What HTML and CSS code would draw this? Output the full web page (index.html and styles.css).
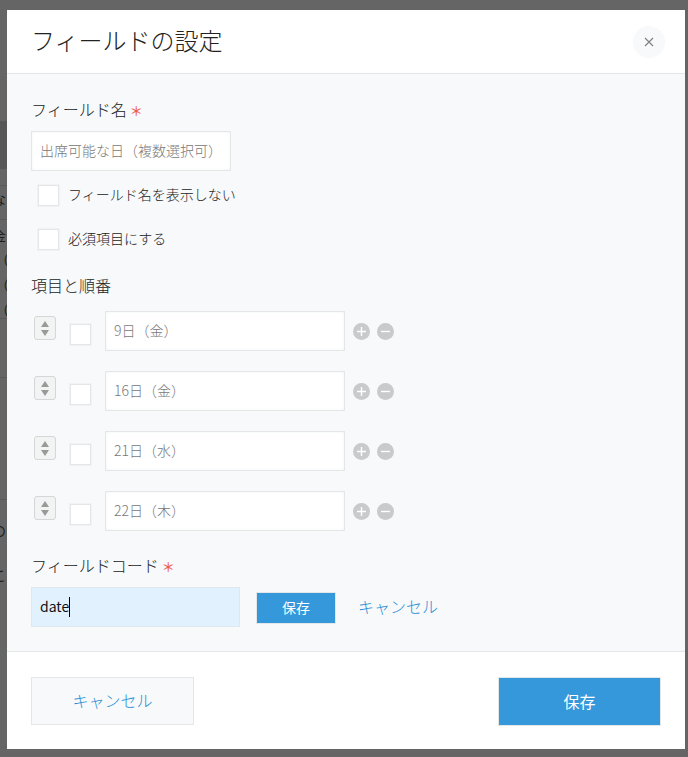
FILE: index.html
```html
<!DOCTYPE html>
<html lang="ja">
<head>
  <meta charset="UTF-8" />
  <title>フィールドの設定</title>
  <link rel="stylesheet" href="styles.css">
</head>
<body>

  <!-- page behind the overlay, only the left edge shows -->
  <div class="backdrop" aria-hidden="true">
    <div class="bg-band"></div>
    <div class="bg-line bg-line-1"></div>
    <div class="bg-line bg-line-2"></div>
    <div class="bg-line bg-line-3"></div>
    <div class="bg-line bg-line-4"></div>
    <div class="bg-line bg-line-5"></div>
    <span class="bg-text bg-text-1">な</span>
    <span class="bg-text bg-text-2">金</span>
    <span class="bg-text bg-text-3">（</span>
    <span class="bg-text bg-text-4">（</span>
    <span class="bg-text bg-text-5">（</span>
    <span class="bg-text bg-text-6">の</span>
    <span class="bg-text bg-text-7">こ</span>
  </div>

  <div class="modal">
    <header class="modal-header">
      <h1>フィールドの設定</h1>
      <button class="close-btn" aria-label="閉じる">
        <svg width="10" height="10" viewBox="0 0 10 10"><path d="M1 1l8 8M9 1l-8 8" stroke="#7b7f83" stroke-width="1.1" fill="none"/></svg>
      </button>
    </header>

    <main class="modal-body">
      <div class="label">フィールド名<span class="req">＊</span></div>
      <input class="text-input name-input" type="text" value="出席可能な日（複数選択可）" />

      <label class="check-row check-row-first"><span class="check"></span><span class="check-text">フィールド名を表示しない</span></label>
      <label class="check-row"><span class="check"></span><span class="check-text">必須項目にする</span></label>

      <div class="label items-label">項目と順番</div>

      <div class="item-row">
        <span class="sorter"><i class="up"></i><i class="down"></i></span>
        <span class="check"></span>
        <input class="text-input item-input" type="text" value="9日（金）" />
        <span class="round-btn"><svg width="17" height="17" viewBox="0 0 17 17"><path d="M4 8.5h9M8.5 4v9" stroke="#fff" stroke-width="1.4"/></svg></span>
        <span class="round-btn"><svg width="17" height="17" viewBox="0 0 17 17"><path d="M4 8.5h9" stroke="#fff" stroke-width="1.4"/></svg></span>
      </div>
      <div class="item-row">
        <span class="sorter"><i class="up"></i><i class="down"></i></span>
        <span class="check"></span>
        <input class="text-input item-input" type="text" value="16日（金）" />
        <span class="round-btn"><svg width="17" height="17" viewBox="0 0 17 17"><path d="M4 8.5h9M8.5 4v9" stroke="#fff" stroke-width="1.4"/></svg></span>
        <span class="round-btn"><svg width="17" height="17" viewBox="0 0 17 17"><path d="M4 8.5h9" stroke="#fff" stroke-width="1.4"/></svg></span>
      </div>
      <div class="item-row">
        <span class="sorter"><i class="up"></i><i class="down"></i></span>
        <span class="check"></span>
        <input class="text-input item-input" type="text" value="21日（水）" />
        <span class="round-btn"><svg width="17" height="17" viewBox="0 0 17 17"><path d="M4 8.5h9M8.5 4v9" stroke="#fff" stroke-width="1.4"/></svg></span>
        <span class="round-btn"><svg width="17" height="17" viewBox="0 0 17 17"><path d="M4 8.5h9" stroke="#fff" stroke-width="1.4"/></svg></span>
      </div>
      <div class="item-row">
        <span class="sorter"><i class="up"></i><i class="down"></i></span>
        <span class="check"></span>
        <input class="text-input item-input" type="text" value="22日（木）" />
        <span class="round-btn"><svg width="17" height="17" viewBox="0 0 17 17"><path d="M4 8.5h9M8.5 4v9" stroke="#fff" stroke-width="1.4"/></svg></span>
        <span class="round-btn"><svg width="17" height="17" viewBox="0 0 17 17"><path d="M4 8.5h9" stroke="#fff" stroke-width="1.4"/></svg></span>
      </div>

      <div class="label code-label">フィールドコード<span class="req">＊</span></div>
      <div class="code-row">
        <div class="code-input"><span>date</span><span class="caret"></span></div>
        <button class="btn-primary btn-small">保存</button>
        <a class="link" href="#">キャンセル</a>
      </div>
    </main>

    <footer class="modal-footer">
      <button class="btn-cancel">キャンセル</button>
      <button class="btn-primary btn-large">保存</button>
    </footer>
  </div>

</body>
</html>
```

FILE: styles.css
```css
* {
  box-sizing: border-box;
}
html, body {
  height: 100%;
}
body {
  margin: 0;
  padding: 10px 3px 8px 7px;
  overflow: hidden;
  background: #646564;
  font-family: "Noto Sans CJK JP", "Noto Sans", sans-serif;
  color: #333;
}

/* Page behind overlay */
.backdrop {
  position: absolute;
  top: 0;
  left: 0;
  width: 7px;
  height: 100%;
  overflow: hidden;
}
.bg-band {
  position: absolute;
  top: 121px;
  left: 0;
  width: 7px;
  height: 48px;
  background: #565756;
}
.bg-line {
  position: absolute;
  left: 0;
  width: 7px;
  height: 1px;
  background: #585958;
}
.bg-line-1 { top: 185px; }
.bg-line-2 { top: 219px; }
.bg-line-3 { top: 318px; }
.bg-line-4 { top: 377px; }
.bg-line-5 { top: 499px; }
.bg-text {
  position: absolute;
  left: -8px;
  font-size: 14px;
  line-height: 20px;
  color: #1d1d1d;
}
.bg-text-1 { top: 189px; }
.bg-text-2 { top: 225px; }
.bg-text-3 { top: 249px; left: -5px; }
.bg-text-4 { top: 274px; left: -5px; }
.bg-text-5 { top: 299px; left: -5px; }
.bg-text-6 { top: 520px; }
.bg-text-7 { top: 565px; }

/* Modal */
.modal {
  position: relative;
  display: flex;
  flex-direction: column;
  width: 678px;
  height: 739px;
  background: #fff;
}
.modal-header {
  display: flex;
  align-items: center;
  justify-content: space-between;
  height: 64px;
  padding: 0 20px 0 24px;
  border-bottom: 1px solid #e3e7e8;
}
.modal-header h1 {
  margin: 0 0 5px;
  font-size: 24px;
  font-weight: 300;
  color: #222;
}
.close-btn {
  display: flex;
  align-items: center;
  justify-content: center;
  width: 32px;
  height: 32px;
  margin-top: 1px;
  padding: 0;
  border: none;
  border-radius: 50%;
  background: #f7f9fa;
}

.modal-body {
  flex: 1;
  padding: 23px 24px 0;
  background: #f7f9fa;
  border-bottom: 1px solid #e3e7e8;
}
.label {
  height: 24px;
  font-size: 16px;
  font-weight: 300;
  line-height: 24px;
  color: #222;
}
.req {
  margin-left: 3px;
  font-size: 13px;
  font-weight: 500;
  color: #ec5f4f;
}

.text-input {
  display: block;
  height: 40px;
  padding: 0 8px 2px;
  border: 1px solid #e3e7e8;
  background: #fff;
  box-shadow: inset 0 0 3px #f0f2f3;
  font-family: inherit;
  font-size: 14px;
  font-weight: 300;
  color: #777;
  outline: none;
}
.name-input {
  width: 200px;
  margin-top: 10px;
}

.check {
  flex: none;
  display: block;
  width: 21px;
  height: 21px;
  border: 1px solid #e3e7e8;
  box-shadow: 0 0 0 1px #f0f2f3;
  background: #fff;
}
.check-row {
  display: flex;
  align-items: center;
  gap: 9px;
  height: 21px;
  margin: 23px 0 0 7px;
  font-size: 14px;
  font-weight: 300;
  color: #222;
}
.check-text {
  padding-bottom: 3px;
}
.check-row-first {
  margin-top: 14px;
}
.items-label {
  margin-top: 23px;
}

/* Item rows */
.item-row {
  display: flex;
  align-items: center;
  height: 40px;
  margin-top: 20px;
}
.items-label + .item-row {
  margin-top: 14px;
}
.sorter {
  flex: none;
  display: flex;
  flex-direction: column;
  align-items: center;
  justify-content: center;
  gap: 3px;
  width: 22px;
  height: 24px;
  margin: -6px 14px 0 3px;
  border: 1px solid #d4d6d7;
  border-radius: 3px;
  background: #f2f3f3;
}
.sorter i {
  display: block;
  width: 0;
  height: 0;
  border-left: 4px solid transparent;
  border-right: 4px solid transparent;
}
.sorter .up {
  border-bottom: 6px solid #999;
}
.sorter .down {
  border-top: 6px solid #999;
}
.item-row .check {
  margin: 7px 14px 0 0;
}
.item-input {
  width: 240px;
}
.round-btn {
  flex: none;
  display: block;
  width: 17px;
  height: 17px;
  margin-left: 7px;
  border-radius: 50%;
  background: #c9cacb;
}
.round-btn svg {
  display: block;
}
.item-input + .round-btn {
  margin-left: 8px;
}

/* Field code */
.code-label {
  margin-top: 22px;
}
.code-row {
  display: flex;
  align-items: center;
  margin-top: 10px;
}
.code-input {
  display: flex;
  align-items: center;
  width: 209px;
  height: 40px;
  padding: 0 8px;
  border: 1px solid #dfe8ed;
  background: #e1f2fe;
  font-size: 14px;
  color: #111;
}
.code-input span:first-child {
  padding-bottom: 2px;
}
.caret {
  width: 1px;
  height: 20px;
  background: #000;
}
.link {
  margin-left: 22px;
  padding-bottom: 2px;
  font-size: 16px;
  font-weight: 300;
  color: #2b8fd6;
  text-decoration: none;
}

.btn-primary {
  padding: 0 0 2px;
  border: 1px solid #e3e7e8;
  background: #3498db;
  color: #fff;
  font-family: inherit;
}
.btn-small {
  width: 80px;
  height: 32px;
  margin: 2px 0 0 16px;
  font-size: 14px;
}
.btn-large {
  width: 163px;
  height: 49px;
  font-size: 16px;
}

/* Footer */
.modal-footer {
  display: flex;
  align-items: flex-start;
  justify-content: space-between;
  height: 97px;
  padding: 25px 24px 0;
}
.btn-cancel {
  width: 163px;
  height: 48px;
  padding: 0 0 2px;
  border: 1px solid #e3e7e8;
  background: #f7f9fa;
  color: #2b8fd6;
  font-family: inherit;
  font-size: 16px;
  font-weight: 300;
}
```
